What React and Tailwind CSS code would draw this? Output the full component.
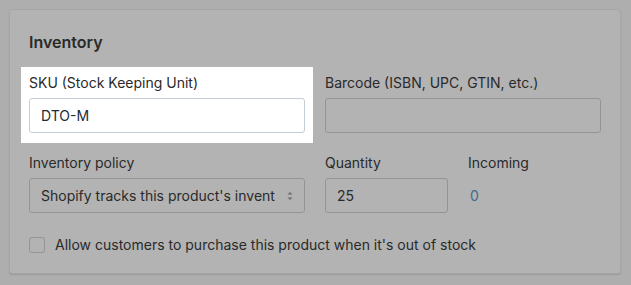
import React from 'react';

function Label({ children }) {
    return <div className="text-[14px] leading-[20px] text-[#2a2a2a] mb-[5px]">{children}</div>;
}

export default function App() {
    return (
        <div className="w-[631px] h-[285px] bg-[#aeaeae] pt-[9px] pl-[9px] font-['Inter','Noto_Sans',sans-serif]">
            <div className="w-[612px] h-[265px] bg-[#b3b3b3] border border-[#a6a6a6] rounded-[3px] shadow-[0_1px_1px_rgba(0,0,0,0.12)] px-[19px] pt-[22px]">
                <h2 className="text-[16px] leading-[20px] font-semibold text-[#2a2a2a] mb-[15px]">Inventory</h2>

                <div className="grid grid-cols-2 gap-x-[20px]">
                    <div className="bg-white -mx-[8px] px-[8px] pt-[6px] pb-[10px]">
                        <Label>SKU (Stock Keeping Unit)</Label>
                        <div className="h-[35px] border border-[#c4cdd5] rounded-[3px] px-[11px] flex items-center text-[14px] text-[#212b36]">DTO-M</div>
                    </div>
                    <div className="pt-[6px] pb-[10px]">
                        <Label>Barcode (ISBN, UPC, GTIN, etc.)</Label>
                        <div className="h-[35px] border border-[#949494] rounded-[3px] bg-[#b3b3b3]" />
                    </div>
                </div>

                <div className="grid grid-cols-2 gap-x-[20px] mt-[10px]">
                    <div>
                        <Label>Inventory policy</Label>
                        <div className="h-[35px] border border-[#949494] rounded-[3px] pl-[11px] pr-[10px] flex items-center justify-between text-[14px] text-[#2a2a2a]">
                            <span className="whitespace-nowrap overflow-hidden">Shopify tracks this product's invent</span>
                            <svg width="8" height="12" viewBox="0 0 8 12" className="shrink-0 ml-[6px]">
                                <path d="M1.5 4.5 L4 2 L6.5 4.5 Z" fill="#6d6d6d" />
                                <path d="M1.5 7.5 L4 10 L6.5 7.5 Z" fill="#6d6d6d" />
                            </svg>
                        </div>
                    </div>
                    <div className="flex gap-x-[20px]">
                        <div className="w-[123px]">
                            <Label>Quantity</Label>
                            <div className="h-[35px] border border-[#949494] rounded-[3px] px-[11px] flex items-center text-[14px] text-[#2a2a2a]">25</div>
                        </div>
                        <div>
                            <Label>Incoming</Label>
                            <div className="h-[35px] flex items-center pl-[2px] text-[14px] text-[#3f6a8f]">0</div>
                        </div>
                    </div>
                </div>

                <label className="flex items-center mt-[21px] text-[14px] text-[#2a2a2a]">
                    <span className="w-[16px] h-[16px] border border-[#949494] rounded-[3px] mr-[10px] shrink-0" />
                    Allow customers to purchase this product when it's out of stock
                </label>
            </div>
        </div>
    );
}
